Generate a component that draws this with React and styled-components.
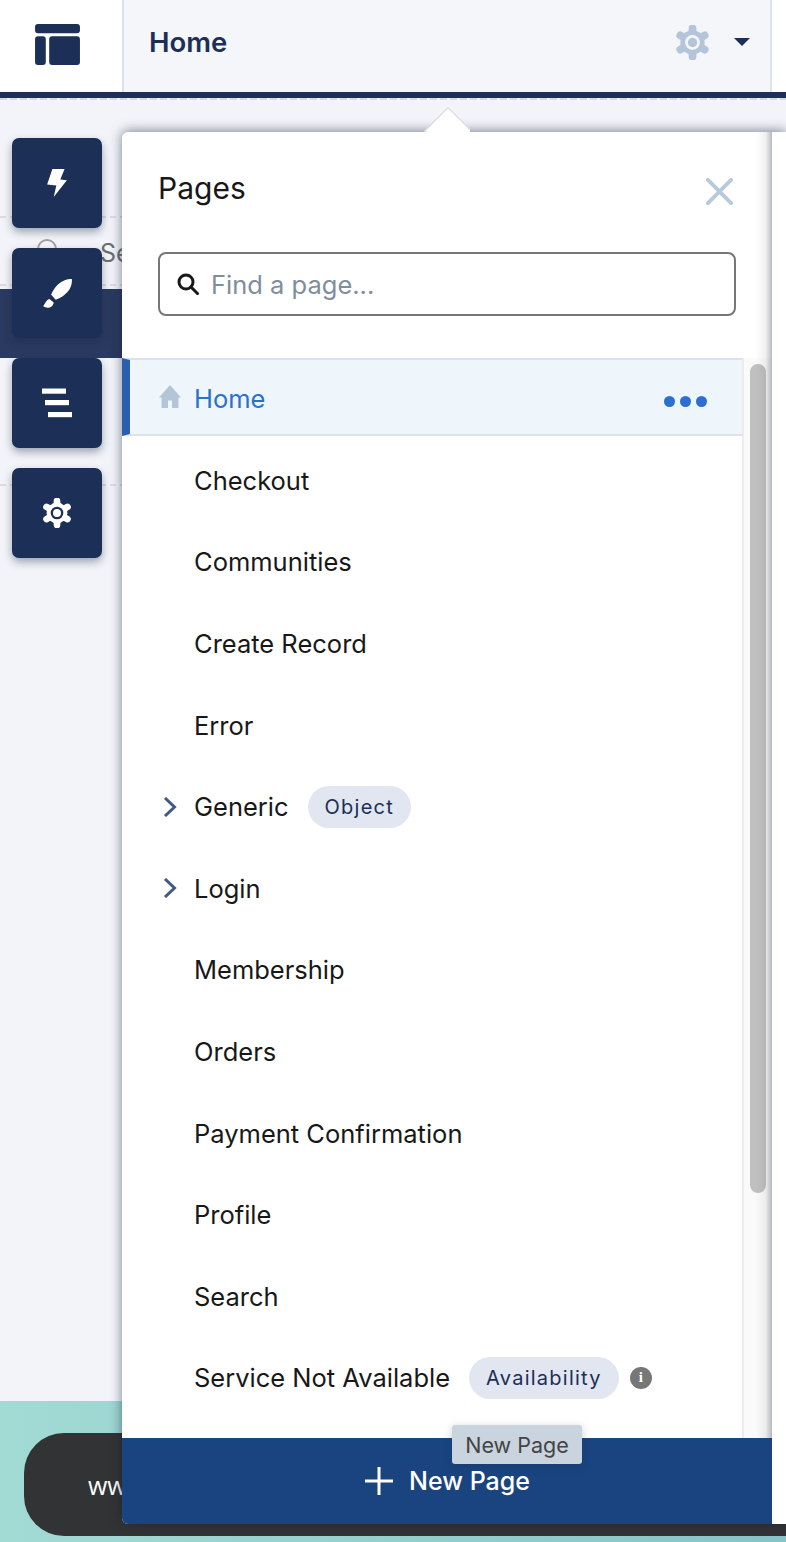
import React from "react";
import styled, { createGlobalStyle } from "styled-components";

const navy = "#1b2f57";
const steel = "#b5c5d9";

const Global = createGlobalStyle`
  html, body { margin: 0; padding: 0; background: #fff; }
  * { box-sizing: border-box; }
  body { font-family: Inter, "Liberation Sans", sans-serif; }
`;

const Page = styled.div`
  position: relative;
  width: 786px;
  height: 1542px;
  overflow: hidden;
  display: flex;
  flex-direction: column;
  background: #f2f4f9;
`;

const TopBar = styled.header`
  display: flex;
  height: 98px;
  flex: none;
  border-bottom: 6px solid ${navy};
  background: #fff;
`;
const LogoCell = styled.div`
  width: 124px;
  flex: none;
  display: flex;
  align-items: center;
  justify-content: center;
  padding-right: 7px;
  padding-bottom: 3px;
  border-right: 2px solid #dde1ec;
`;
const TitleCell = styled.div`
  width: 648px;
  flex: none;
  display: flex;
  align-items: center;
  padding: 0 20px 8px 25px;
  background: #f4f6fa;
  border-right: 2px solid #dde1ec;
`;
const PageTitle = styled.h1`
  flex: 1;
  margin: 0;
  font-size: 27.5px;
  font-weight: 600;
  color: ${navy};
`;
const Caret = styled.span`
  width: 0;
  height: 0;
  margin-left: 24px;
  border-left: 8px solid transparent;
  border-right: 8px solid transparent;
  border-top: 8px solid ${navy};
`;
const HeaderDash = styled.div`
  height: 1.5px;
  flex: none;
  background: repeating-linear-gradient(to right, #d6d9e1 0 7px, transparent 7px 10px);
`;

const Canvas = styled.main`
  flex: 1;
  display: flex;
  flex-direction: column;
`;
const DashedRow = styled.div`
  height: ${(p) => p.$h}px;
  flex: none;
  margin-top: ${(p) => p.$gap || 0}px;
  border-bottom: 2px dashed #d9dce3;
`;
const SearchStub = styled(DashedRow)`
  display: flex;
  align-items: flex-start;
  padding: 21px 0 0 37px;
  color: #6f6f6f;
  font-size: 25px;
  line-height: 28px;
`;
const StubRing = styled.span`
  width: 20px;
  height: 20px;
  flex: none;
  margin-right: 43px;
  border: 2px solid #a0a0a0;
  border-radius: 50%;
`;
const Band = styled.div`
  height: 69px;
  flex: none;
  margin-top: 3px;
  background: #2a3a60;
`;
const Promo = styled.footer`
  height: 141px;
  flex: none;
  padding: 32px 0 6px 24px;
  background: linear-gradient(to right, #a2dad4, #86c4ca);
`;
const PromoPill = styled.div`
  height: 103px;
  display: flex;
  align-items: center;
  padding-left: 64px;
  border-radius: 40px 0 0 40px;
  background: #323335;
  color: #fff;
  font: 500 25px "Open Sans", sans-serif;
`;

const Rail = styled.nav`
  position: absolute;
  left: 12px;
  top: 138px;
  display: flex;
  flex-direction: column;
  gap: 20px;
`;
const RailButton = styled.button`
  width: 90px;
  height: 90px;
  padding: 0;
  border: 0;
  border-radius: 7px;
  display: flex;
  align-items: center;
  justify-content: center;
  background: ${navy};
  box-shadow: 0 4px 9px rgba(27, 40, 70, 0.4);
`;

const Popover = styled.aside`
  position: absolute;
  left: 122px;
  top: 132px;
  right: 0;
  height: 1392px;
  background: #fff;
  border-radius: 6px 0 0 6px;
  box-shadow: 0 -1px 12px rgba(20, 30, 55, 0.55);
`;
const Arrow = styled.span`
  position: absolute;
  left: 302px;
  top: -25px;
  width: 46px;
  height: 25px;
  overflow: hidden;
  &::before {
    content: "";
    position: absolute;
    left: 7px;
    top: 7px;
    width: 32px;
    height: 32px;
    background: #fff;
    border: 1px solid #cfd1d6;
    transform: rotate(45deg);
  }
`;
const Sheet = styled.div`
  position: relative;
  width: 650px;
  height: 100%;
  display: flex;
  flex-direction: column;
  border-radius: 6px 0 0 6px;
  overflow: hidden;
`;
const EdgeShade = styled.span`
  position: absolute;
  top: 0;
  right: 0;
  bottom: 86px;
  width: 16px;
  pointer-events: none;
  background: linear-gradient(to right, rgba(40, 45, 60, 0), rgba(40, 45, 60, 0.07) 60%, rgba(40, 45, 60, 0.32));
`;
const PanelHead = styled.div`
  height: 120px;
  flex: none;
  display: flex;
  align-items: center;
  justify-content: space-between;
  padding: 0 39px 8px 36px;
`;
const PanelTitle = styled.h2`
  margin: 0;
  font-size: 30px;
  font-weight: 400;
  color: #181818;
`;
const SearchBox = styled.div`
  height: 64px;
  flex: none;
  margin: 0 36px 42px 36px;
  display: flex;
  align-items: center;
  gap: 12px;
  padding-left: 17px;
  border: 2px solid #777;
  border-radius: 8px;
`;
const SearchInput = styled.span`
  padding-top: 1px;
  font-size: 25.5px;
  color: #808d9d;
`;
const ListArea = styled.div`
  flex: 1;
  min-height: 0;
  display: flex;
`;
const PageList = styled.ul`
  flex: 1;
  margin: 0;
  padding: 0;
  list-style: none;
  overflow: hidden;
`;
const Row = styled.li`
  height: ${(p) => (p.$active ? 78 : 81.6)}px;
  display: flex;
  align-items: center;
  padding-left: ${(p) => (p.$active ? 29 : 37)}px;
  padding-right: 35px;
  padding-top: ${(p) => (p.$active ? 2.5 : 7)}px;
  font-size: 25.5px;
  color: ${(p) => (p.$active ? "#2b6fd1" : "#181818")};
  background: ${(p) => (p.$active ? "#eff6fb" : "transparent")};
  border-top: ${(p) => (p.$active ? "2px solid #dde1ec" : "0")};
  border-bottom: ${(p) => (p.$active ? "2px solid #dde1ec" : "0")};
  border-left: ${(p) => (p.$active ? "8px solid #2a5fad" : "0")};
`;
const RowIcon = styled.span`
  width: 35px;
  flex: none;
  display: flex;
  align-items: center;
  margin-top: ${(p) => (p.$home ? -3 : 0)}px;
`;
const RowLabel = styled.span`
  white-space: nowrap;
`;
const Badge = styled.span`
  height: 42px;
  margin-left: 19px;
  padding: 0 17px;
  display: flex;
  align-items: center;
  border-radius: 21px;
  background: #e1e6f0;
  color: ${navy};
  font-size: 20px;
  letter-spacing: 1.25px;
`;
const Dots = styled.span`
  margin-left: auto;
  display: flex;
  gap: 5px;
  margin-top: 6px;
`;
const Dot = styled.i`
  width: 11px;
  height: 11px;
  border-radius: 50%;
  background: #2b6fd1;
`;
const InfoIcon = styled.span`
  width: 22px;
  height: 22px;
  margin-left: 11px;
  display: flex;
  align-items: center;
  justify-content: center;
  border-radius: 50%;
  background: #777;
  color: #fff;
  font: 700 15px "Liberation Serif", serif;
`;
const Track = styled.div`
  width: 30px;
  flex: none;
  padding: 6px 6px 0 6px;
  background: #fafafa;
  border-left: 2px solid #ececec;
`;
const Thumb = styled.div`
  width: 16px;
  height: 829px;
  border-radius: 8px;
  background: #c0c0c0;
`;
const NewPageBar = styled.button`
  height: 86px;
  flex: none;
  display: flex;
  align-items: center;
  justify-content: center;
  gap: 16px;
  padding: 0 0 0 1px;
  border: 0;
  background: #1a4480;
  color: #fff;
  font: 500 25px Inter, sans-serif;
`;
const Tooltip = styled.span`
  position: absolute;
  left: 330px;
  top: 1293px;
  width: 130px;
  height: 39px;
  display: flex;
  align-items: center;
  justify-content: center;
  border-radius: 3px;
  background: #c9d4df;
  color: #444;
  font-size: 21.5px;
  box-shadow: 0 2px 8px rgba(20, 30, 50, 0.22);
`;
const CloseSlot = styled.span`
  display: flex;
  margin-top: 6px;
`;

const LogoIcon = () => (
  <svg width="45" height="41" viewBox="0 0 46 42" fill={navy}>
    <rect x="0" y="0" width="46" height="9.5" rx="3" />
    <rect x="0" y="12.5" width="11" height="29.5" rx="3" />
    <rect x="14.5" y="12.5" width="31.5" height="29.5" rx="3" />
  </svg>
);

const Gear = ({ size, color, hole }) => (
  <svg width={size} height={size} viewBox="0 0 36 36">
    {[0, 60, 120].map((a) => (
      <line key={a} x1="18" y1="3.5" x2="18" y2="32.5" stroke={color} strokeWidth="8" strokeLinecap="round" transform={`rotate(${a} 18 18)`} />
    ))}
    <circle cx="18" cy="18" r="12.5" fill={color} />
    <circle cx="18" cy="18" r="7.6" fill={hole} />
    <circle cx="18" cy="18" r="4.8" fill={color} />
  </svg>
);

const Bolt = () => (
  <svg width="20" height="28" viewBox="52 28 60 85" fill="#fff">
    <path d="M68 28H105L92 60 112 62 72 113 80 78 52 75Z" />
  </svg>
);
const Brush = () => (
  <svg width="29" height="29" viewBox="38 25 87 88" fill="#fff">
    <path d="M125 25C105 24 78 36 62 72L76 88C108 76 128 52 125 25Z" />
    <path d="M57 86C46 90 44 100 38 108 50 116 68 112 70 96Z" />
  </svg>
);
const Bars = () => (
  <svg width="30" height="30" viewBox="0 0 30 30" fill="#fff">
    <rect x="0" y="0.5" width="24" height="5.2" />
    <rect x="3" y="12" width="24" height="5.2" />
    <rect x="6" y="24" width="24" height="5.2" />
  </svg>
);
const CloseIcon = () => (
  <svg width="27" height="27" viewBox="0 0 28 28" stroke="#b9c9dc" strokeWidth="4" strokeLinecap="round">
    <path d="M2 2L26 26M26 2L2 26" />
  </svg>
);
const SearchGlyph = () => (
  <svg width="22" height="22" viewBox="0 0 22 22" fill="none" stroke="#181818" strokeWidth="3">
    <circle cx="9" cy="9" r="7" />
    <path d="M14 14L20.5 20.5" strokeLinecap="square" />
  </svg>
);
const HomeGlyph = () => (
  <svg width="22" height="23" viewBox="0 0 22 23" fill={steel}>
    <path d="M11 0L22 12.5H19.5V23H13V15.5H9V23H2.5V12.5H0Z" />
  </svg>
);
const Chevron = () => (
  <svg width="14" height="20" viewBox="0 0 14 20" fill="none" stroke="#435a80" strokeWidth="3" style={{ marginLeft: 4 }}>
    <path d="M2 1L11.5 10 2 19" />
  </svg>
);
const Plus = () => (
  <svg width="28" height="28" viewBox="0 0 28 28" stroke="#fff" strokeWidth="3">
    <path d="M14 0V28M0 14H28" />
  </svg>
);

const pages = [
  { name: "Checkout" },
  { name: "Communities" },
  { name: "Create Record" },
  { name: "Error" },
  { name: "Generic", chevron: true, badge: "Object" },
  { name: "Login", chevron: true },
  { name: "Membership" },
  { name: "Orders" },
  { name: "Payment Confirmation" },
  { name: "Profile" },
  { name: "Search" },
  { name: "Service Not Available", badge: "Availability", info: true },
];

export default function App() {
  return (
    <Page>
      <Global />
      <TopBar>
        <LogoCell>
          <LogoIcon />
        </LogoCell>
        <TitleCell>
          <PageTitle>Home</PageTitle>
          <Gear size={35} color={steel} hole="#f4f6fa" />
          <Caret />
        </TitleCell>
      </TopBar>
      <HeaderDash />
      <Canvas>
        <DashedRow $h={118.5} />
        <SearchStub $h={68}>
          <StubRing />
          <span>Search</span>
        </SearchStub>
        <Band />
        <DashedRow $h={127} $gap={1} />
      </Canvas>
      <Promo>
        <PromoPill>www.example.com</PromoPill>
      </Promo>

      <Rail>
        <RailButton><Bolt /></RailButton>
        <RailButton><Brush /></RailButton>
        <RailButton><Bars /></RailButton>
        <RailButton><Gear size={30} color="#fff" hole={navy} /></RailButton>
      </Rail>

      <Popover>
        <Arrow />
        <Sheet>
          <PanelHead>
            <PanelTitle>Pages</PanelTitle>
            <CloseSlot><CloseIcon /></CloseSlot>
          </PanelHead>
          <SearchBox>
            <SearchGlyph />
            <SearchInput>Find a page...</SearchInput>
          </SearchBox>
          <ListArea>
            <PageList>
              <Row $active>
                <RowIcon $home><HomeGlyph /></RowIcon>
                <RowLabel>Home</RowLabel>
                <Dots><Dot /><Dot /><Dot /></Dots>
              </Row>
              {pages.map((p) => (
                <Row key={p.name}>
                  <RowIcon>{p.chevron && <Chevron />}</RowIcon>
                  <RowLabel>{p.name}</RowLabel>
                  {p.badge && <Badge>{p.badge}</Badge>}
                  {p.info && <InfoIcon>i</InfoIcon>}
                </Row>
              ))}
            </PageList>
            <Track><Thumb /></Track>
          </ListArea>
          <NewPageBar>
            <Plus />
            New Page
          </NewPageBar>
          <EdgeShade />
        </Sheet>
        <Tooltip>New Page</Tooltip>
      </Popover>
    </Page>
  );
}
